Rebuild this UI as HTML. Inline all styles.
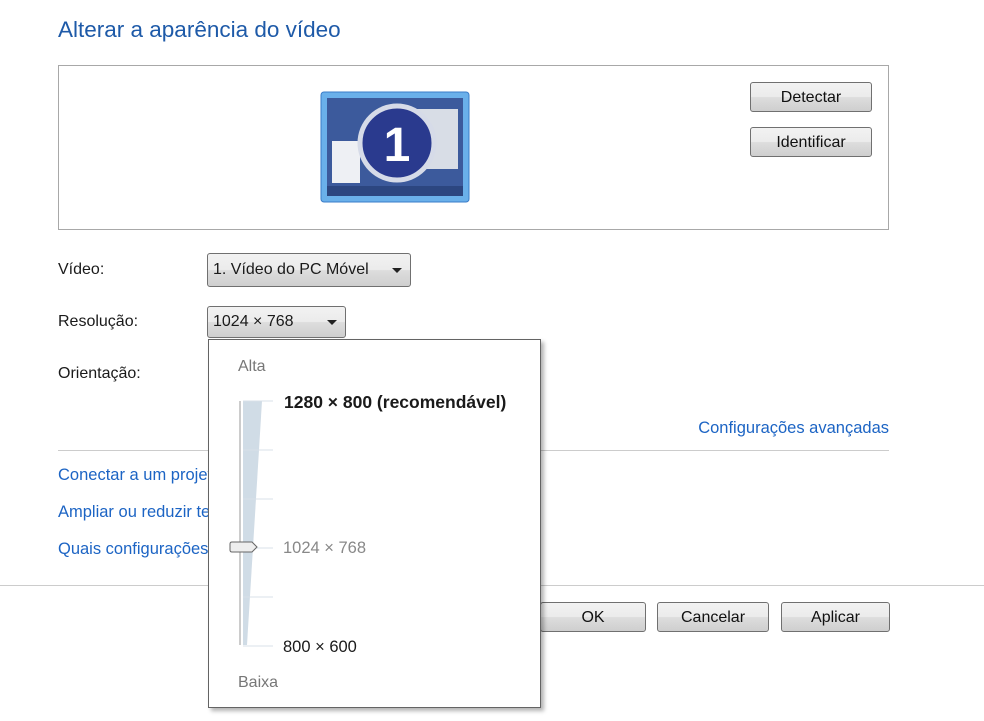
<!DOCTYPE html>
<html><head><meta charset="utf-8"><style>
body{margin:0;width:984px;height:721px;background:#fff;font-family:"Liberation Sans",sans-serif;font-size:15px;color:#1a1a1a;position:relative;overflow:hidden}
.a{position:absolute;white-space:nowrap}
.btn{position:absolute;border:1px solid #707070;border-radius:3px;background:linear-gradient(#f2f2f2,#ebebeb 50%,#dddddd 51%,#cfcfcf);text-align:center;box-sizing:border-box;font-size:16px;color:#111}
.combo{position:absolute;border:1px solid #707070;border-radius:3px;background:linear-gradient(#f2f2f2,#ebebeb 50%,#dddddd 51%,#cfcfcf);box-sizing:border-box;font-size:16px;padding-left:5px}
.combo:after{content:"";position:absolute;right:8px;top:50%;margin-top:-2px;border:5px solid transparent;border-top:5px solid #222;border-bottom:0}
.lnk{color:#1c64c4;font-size:16.5px}
</style></head><body>
<div class="a" style="left:58px;top:17px;font-size:22.5px;color:#1e5aa8">Alterar a aparência do vídeo</div>
<div class="a" style="left:58px;top:65px;width:831px;height:165px;border:1px solid #a8a8a8;box-sizing:border-box"></div>
<svg class="a" style="left:320px;top:91px" width="150" height="112" viewBox="0 0 150 112">
<rect x="1" y="1" width="148" height="110" rx="3" fill="#6ab0ea" stroke="#3a7cc8"/>
<rect x="7" y="7" width="136" height="98" fill="#3c5a9c"/>
<rect x="7" y="95" width="136" height="10" fill="#2c4680"/>
<rect x="88" y="18" width="50" height="60" fill="#d8dde6"/>
<rect x="12" y="50" width="28" height="42" fill="#eef0f4"/>
<circle cx="77" cy="52" r="37" fill="#2a3a8e" stroke="#d6dbe8" stroke-width="5"/>
<text x="77" y="70" text-anchor="middle" font-family="Liberation Sans" font-weight="bold" font-size="48" fill="#fff">1</text>
</svg>
<div class="btn" style="left:750px;top:82px;width:122px;height:30px;line-height:29px">Detectar</div>
<div class="btn" style="left:750px;top:127px;width:122px;height:30px;line-height:29px">Identificar</div>
<div class="a" style="left:58px;top:261px;font-size:16px">Vídeo:</div>
<div class="combo" style="left:207px;top:253px;width:204px;height:34px;line-height:32px">1. Vídeo do PC Móvel</div>
<div class="a" style="left:58px;top:313px;font-size:16px">Resolução:</div>
<div class="combo" style="left:207px;top:306px;width:139px;height:32px;line-height:30px">1024 × 768</div>
<div class="a" style="left:58px;top:365px;font-size:16px">Orientação:</div>
<div class="a lnk" style="right:95px;top:419px">Configurações avançadas</div>
<div class="a" style="left:58px;top:450px;width:831px;height:1px;background:#ccc"></div>
<div class="a lnk" style="left:58px;top:466px">Conectar a um projetor (ou pressione a tecla do Windows e P)</div>
<div class="a lnk" style="left:58px;top:503px">Ampliar ou reduzir texto e outros itens</div>
<div class="a lnk" style="left:58px;top:540px">Quais configurações de vídeo devo escolher?</div>
<div class="a" style="left:0;top:585px;width:984px;height:1px;background:#ccc"></div>
<div class="btn" style="left:540px;top:602px;width:106px;height:30px;line-height:29px">OK</div>
<div class="btn" style="left:657px;top:602px;width:112px;height:30px;line-height:29px">Cancelar</div>
<div class="btn" style="left:781px;top:602px;width:109px;height:30px;line-height:29px">Aplicar</div>
<div class="a" style="left:208px;top:339px;width:333px;height:369px;background:#fff;border:1px solid #646464;box-sizing:border-box;box-shadow:3px 3px 4px rgba(0,0,0,.3)">
<div class="a" style="left:29px;top:18px;color:#777;font-size:16px">Alta</div>
<div class="a" style="left:29px;top:334px;color:#777;font-size:16px">Baixa</div>
<svg class="a" style="left:20px;top:55px" width="60" height="260">
<polygon points="14,6 33,6 18,250 14,250" fill="#d0dce6"/>
<line x1="11" y1="6" x2="11" y2="250" stroke="#999"/>
<g stroke="#d8e0e8"><line x1="14" y1="6" x2="44" y2="6"/><line x1="14" y1="55" x2="44" y2="55"/><line x1="14" y1="104" x2="44" y2="104"/><line x1="14" y1="153" x2="44" y2="153"/><line x1="14" y1="202" x2="44" y2="202"/><line x1="14" y1="251" x2="44" y2="251"/></g>
<path d="M3,147 h20 l5,5 l-5,5 h-20 q-2,0 -2,-2 v-6 q0,-2 2,-2z" fill="#eee" stroke="#666"/>
</svg>
<div class="a" style="left:75px;top:52px;font-weight:bold;font-size:17.5px">1280 × 800 (recomendável)</div>
<div class="a" style="left:74px;top:199px;color:#888;font-size:16.5px">1024 × 768</div>
<div class="a" style="left:74px;top:298px;font-size:16.5px">800 × 600</div>
</div>
</body></html>
